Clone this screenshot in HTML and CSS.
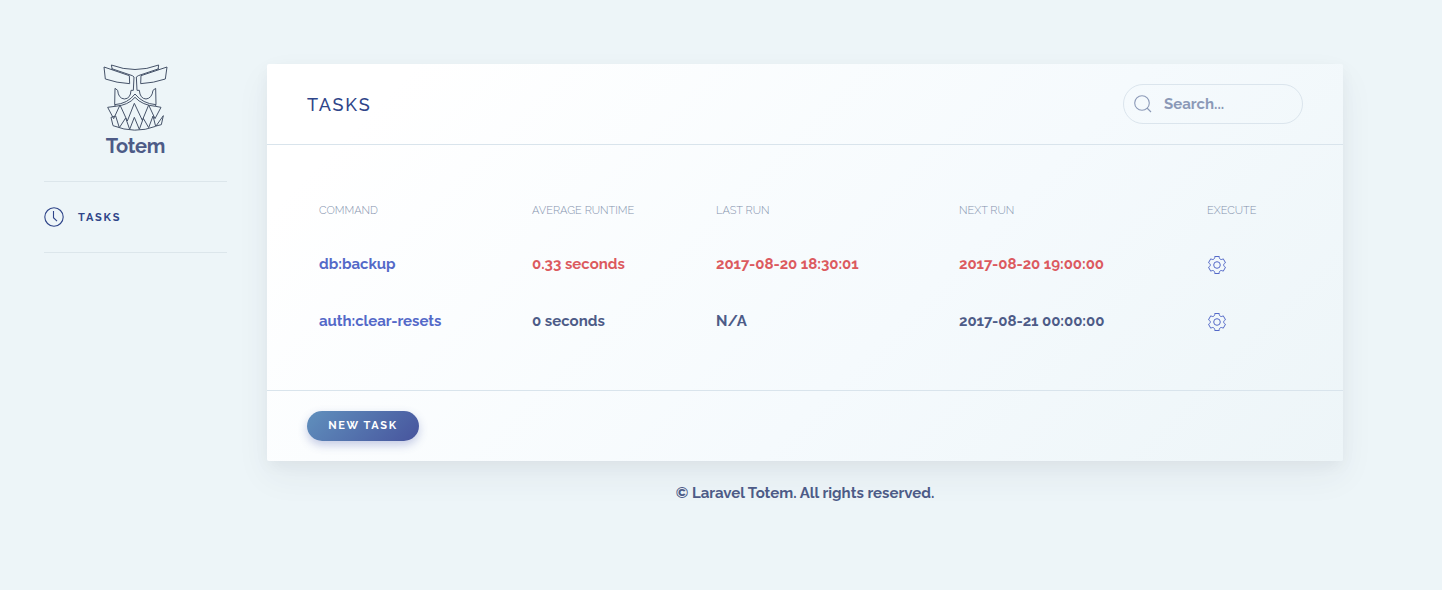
FILE: index.html
```html
<!DOCTYPE html>
<html lang="en">
<head>
<meta charset="utf-8">
<title>Totem</title>
<link rel="stylesheet" href="styles.css">
</head>
<body>
<div class="layout">
  <aside class="sidebar">
    <a class="brand">
      <svg class="logo" viewBox="24 18 195 201" fill="none" stroke="currentColor" stroke-width="3" stroke-linejoin="round">
        <path d="M27 27 103 53 104 77Q65 75 31 63ZM216 27 138 53 137 77Q176 75 211 63Z"/>
        <path d="M52 35 49 21Q120 48 191 21L189 35M50 32 112 53 117 57 115 97H108Q107 122 88 123 70 121 68 97L60 91 59 140Q98 137 120 108 143 137 183 140L182 91 174 97Q171 121 153 123 135 122 133 97H126L124 57 130 53 192 32"/>
        <path d="M60 140 60 145Q100 142 120 118 142 142 182 145V140"/>
        <path d="M60 145 38 148 56 182 75 141 97 189 118 136 142 187 161 141 180 182 198 148 182 145"/>
        <path d="M48 178 54 203Q120 229 182 205L174 174 161 209 145 181 133 214 118 178 104 214 92 180 73 209 62 174ZM205 173 199 200 183 204Z"/>
      </svg>
      <span class="brand-name">Totem</span>
    </a>
    <nav class="menu">
      <a class="menu-item">
        <svg class="icon-clock" viewBox="0 0 20 20" fill="none" stroke="currentColor" stroke-width="1.1"><circle cx="10" cy="10" r="9.2"/><path d="M9.500 4V10.700L13 14.200"/></svg>
        <span class="menu-label">Tasks</span>
      </a>
    </nav>
  </aside>
  <main class="main">
    <section class="card">
      <header class="card-header">
        <h1 class="title">Tasks</h1>
        <label class="search">
          <svg class="icon-search" viewBox="0 0 20 20" fill="none" stroke="currentColor" stroke-width="1.1"><circle cx="9" cy="9" r="7.3"/><path d="M14 14 18 18"/></svg>
          <input class="search-input" placeholder="Search...">
        </label>
      </header>
      <div class="card-body">
        <div class="row head"><span>Command</span><span>Average Runtime</span><span>Last Run</span><span>Next Run</span><span>Execute</span></div>
        <div class="row failed">
          <a class="command">db:backup</a><span>0.33 seconds</span><span class="date">2017-08-20 18:30:01</span><span class="date">2017-08-20 19:00:00</span>
          <a class="command gear"><svg class="icon-gear" viewBox="0 0 20 20" fill="none" stroke="currentColor"><circle cx="10" cy="10" r="3.3"/><path d="M18.490 12.290 16.210 16.240C15.320 15.500 14.190 15.280 13.300 15.790 12.430 16.290 12.050 17.370 12.250 18.500H7.740C7.940 17.370 7.550 16.300 6.680 15.790 5.800 15.270 4.660 15.490 3.770 16.240L1.500 12.290C2.570 11.870 3.320 11 3.320 9.990 3.310 8.980 2.570 8.120 1.500 7.720L3.770 3.780C4.650 4.520 5.790 4.740 6.690 4.230 7.560 3.720 7.940 2.640 7.740 1.500H12.260C12.070 2.640 12.440 3.710 13.310 4.220 14.210 4.730 15.340 4.520 16.230 3.790L18.490 7.710C17.400 8.120 16.660 8.990 16.670 10.010 16.670 11.020 17.420 11.880 18.490 12.290Z"/></svg></a>
        </div>
        <div class="row">
          <a class="command name-long">auth:clear-resets</a><span>0 seconds</span><span>N/A</span><span class="date">2017-08-21 00:00:00</span>
          <a class="command gear"><svg class="icon-gear" viewBox="0 0 20 20" fill="none" stroke="currentColor"><circle cx="10" cy="10" r="3.3"/><path d="M18.490 12.290 16.210 16.240C15.320 15.500 14.190 15.280 13.300 15.790 12.430 16.290 12.050 17.370 12.250 18.500H7.740C7.940 17.370 7.550 16.300 6.680 15.790 5.800 15.270 4.660 15.490 3.770 16.240L1.500 12.290C2.570 11.870 3.320 11 3.320 9.990 3.310 8.980 2.570 8.120 1.500 7.720L3.770 3.780C4.650 4.520 5.790 4.740 6.690 4.230 7.560 3.720 7.940 2.640 7.740 1.500H12.260C12.070 2.640 12.440 3.710 13.310 4.220 14.210 4.730 15.340 4.520 16.230 3.790L18.490 7.710C17.400 8.120 16.660 8.990 16.670 10.010 16.670 11.020 17.420 11.880 18.490 12.290Z"/></svg></a>
        </div>
      </div>
      <footer class="card-footer"><button class="button">New Task</button></footer>
    </section>
    <p class="copyright">© Laravel Totem. All rights reserved.</p>
  </main>
</div>
</body>
</html>
```
FILE: styles.css
```css
* { box-sizing: border-box; }
body { margin: 0; min-height: 590px; background: #edf5f8; color: #4d5b87; font: 700 15px/24px Raleway, Lato, sans-serif; }
.layout { display: flex; padding: 64px 99px 0 44px; gap: 40px; }
.sidebar { width: 183px; flex: none; }
.brand { display: flex; flex-direction: column; align-items: center; height: 117px; }
.logo { width: 65px; height: 67px; display: block; color: #465369; }
.brand-name { font-size: 20px; line-height: 31px; letter-spacing: -.2px; white-space: nowrap; }
.menu { border: solid #dce6eb; border-width: 1px 0; height: 72px; display: flex; align-items: center; }
.menu-item { display: flex; align-items: center; gap: 14px; color: #2f4589; }
.icon-clock { width: 20px; height: 20px; }
.menu-label { padding-top: 1px; font-size: 11px; letter-spacing: 1.8px; text-transform: uppercase; }
.main { flex: 1; }
.card { height: 397px; display: flex; flex-direction: column; border-radius: 2px; background: linear-gradient(135deg, #fff 0%, #fff 10%, #f5fafd 60%, #edf5f8 100%); box-shadow: 0 15px 35px rgba(50,50,93,.06), 0 5px 15px rgba(0,0,0,.04); }
.card-header { height: 81px; padding: 0 40px; display: flex; justify-content: space-between; align-items: center; border-bottom: 1px solid #d9e4ec; }
.title { margin: 0; padding-top: 2px; color: #2f4589; font-size: 18px; font-weight: 500; letter-spacing: 1.8px; text-transform: uppercase; }
.search { width: 180px; height: 40px; display: flex; align-items: center; padding: 0 10px 0 9px; gap: 11px; border: 1px solid #dbe5ed; border-radius: 20px; color: #8b99b7; }
.icon-search { width: 20px; height: 20px; flex: none; }
.search-input { width: 110px; padding: 0; border: 0; outline: 0; background: none; font: inherit; }
.search-input::placeholder { color: #8b99b7; opacity: 1; }
.card-body { flex: 1; padding: 40px 52px 0; }
.row { height: 57px; display: grid; grid-template-columns: 213px 184px 243px 248px 1fr; align-items: center; white-space: nowrap; padding-bottom: 2px; }
.head { height: 51px; padding: 0; color: #8492ad; font-size: 11px; font-weight: 300; text-transform: uppercase; }
.failed { color: #dc5a5f; }
.date { letter-spacing: -.04px; }
.name-long { letter-spacing: -.05px; }
.command { color: #5469c8; }
.gear { display: flex; padding-top: 2px; }
.icon-gear { width: 20px; height: 20px; }
.card-footer { height: 71px; border-top: 1px solid #d9e4ec; padding: 20px 40px; }
.button { display: block; width: 112px; height: 30px; padding: 0; border: 0; border-radius: 15px; color: #fff; background: linear-gradient(135deg, #6090bd, #47549d); box-shadow: 0 4px 10px rgba(70,85,170,.3); font: inherit; font-size: 11px; line-height: 30px; letter-spacing: 1.7px; text-transform: uppercase; }
.copyright { margin: 20px 0 0; text-align: center; }
```
